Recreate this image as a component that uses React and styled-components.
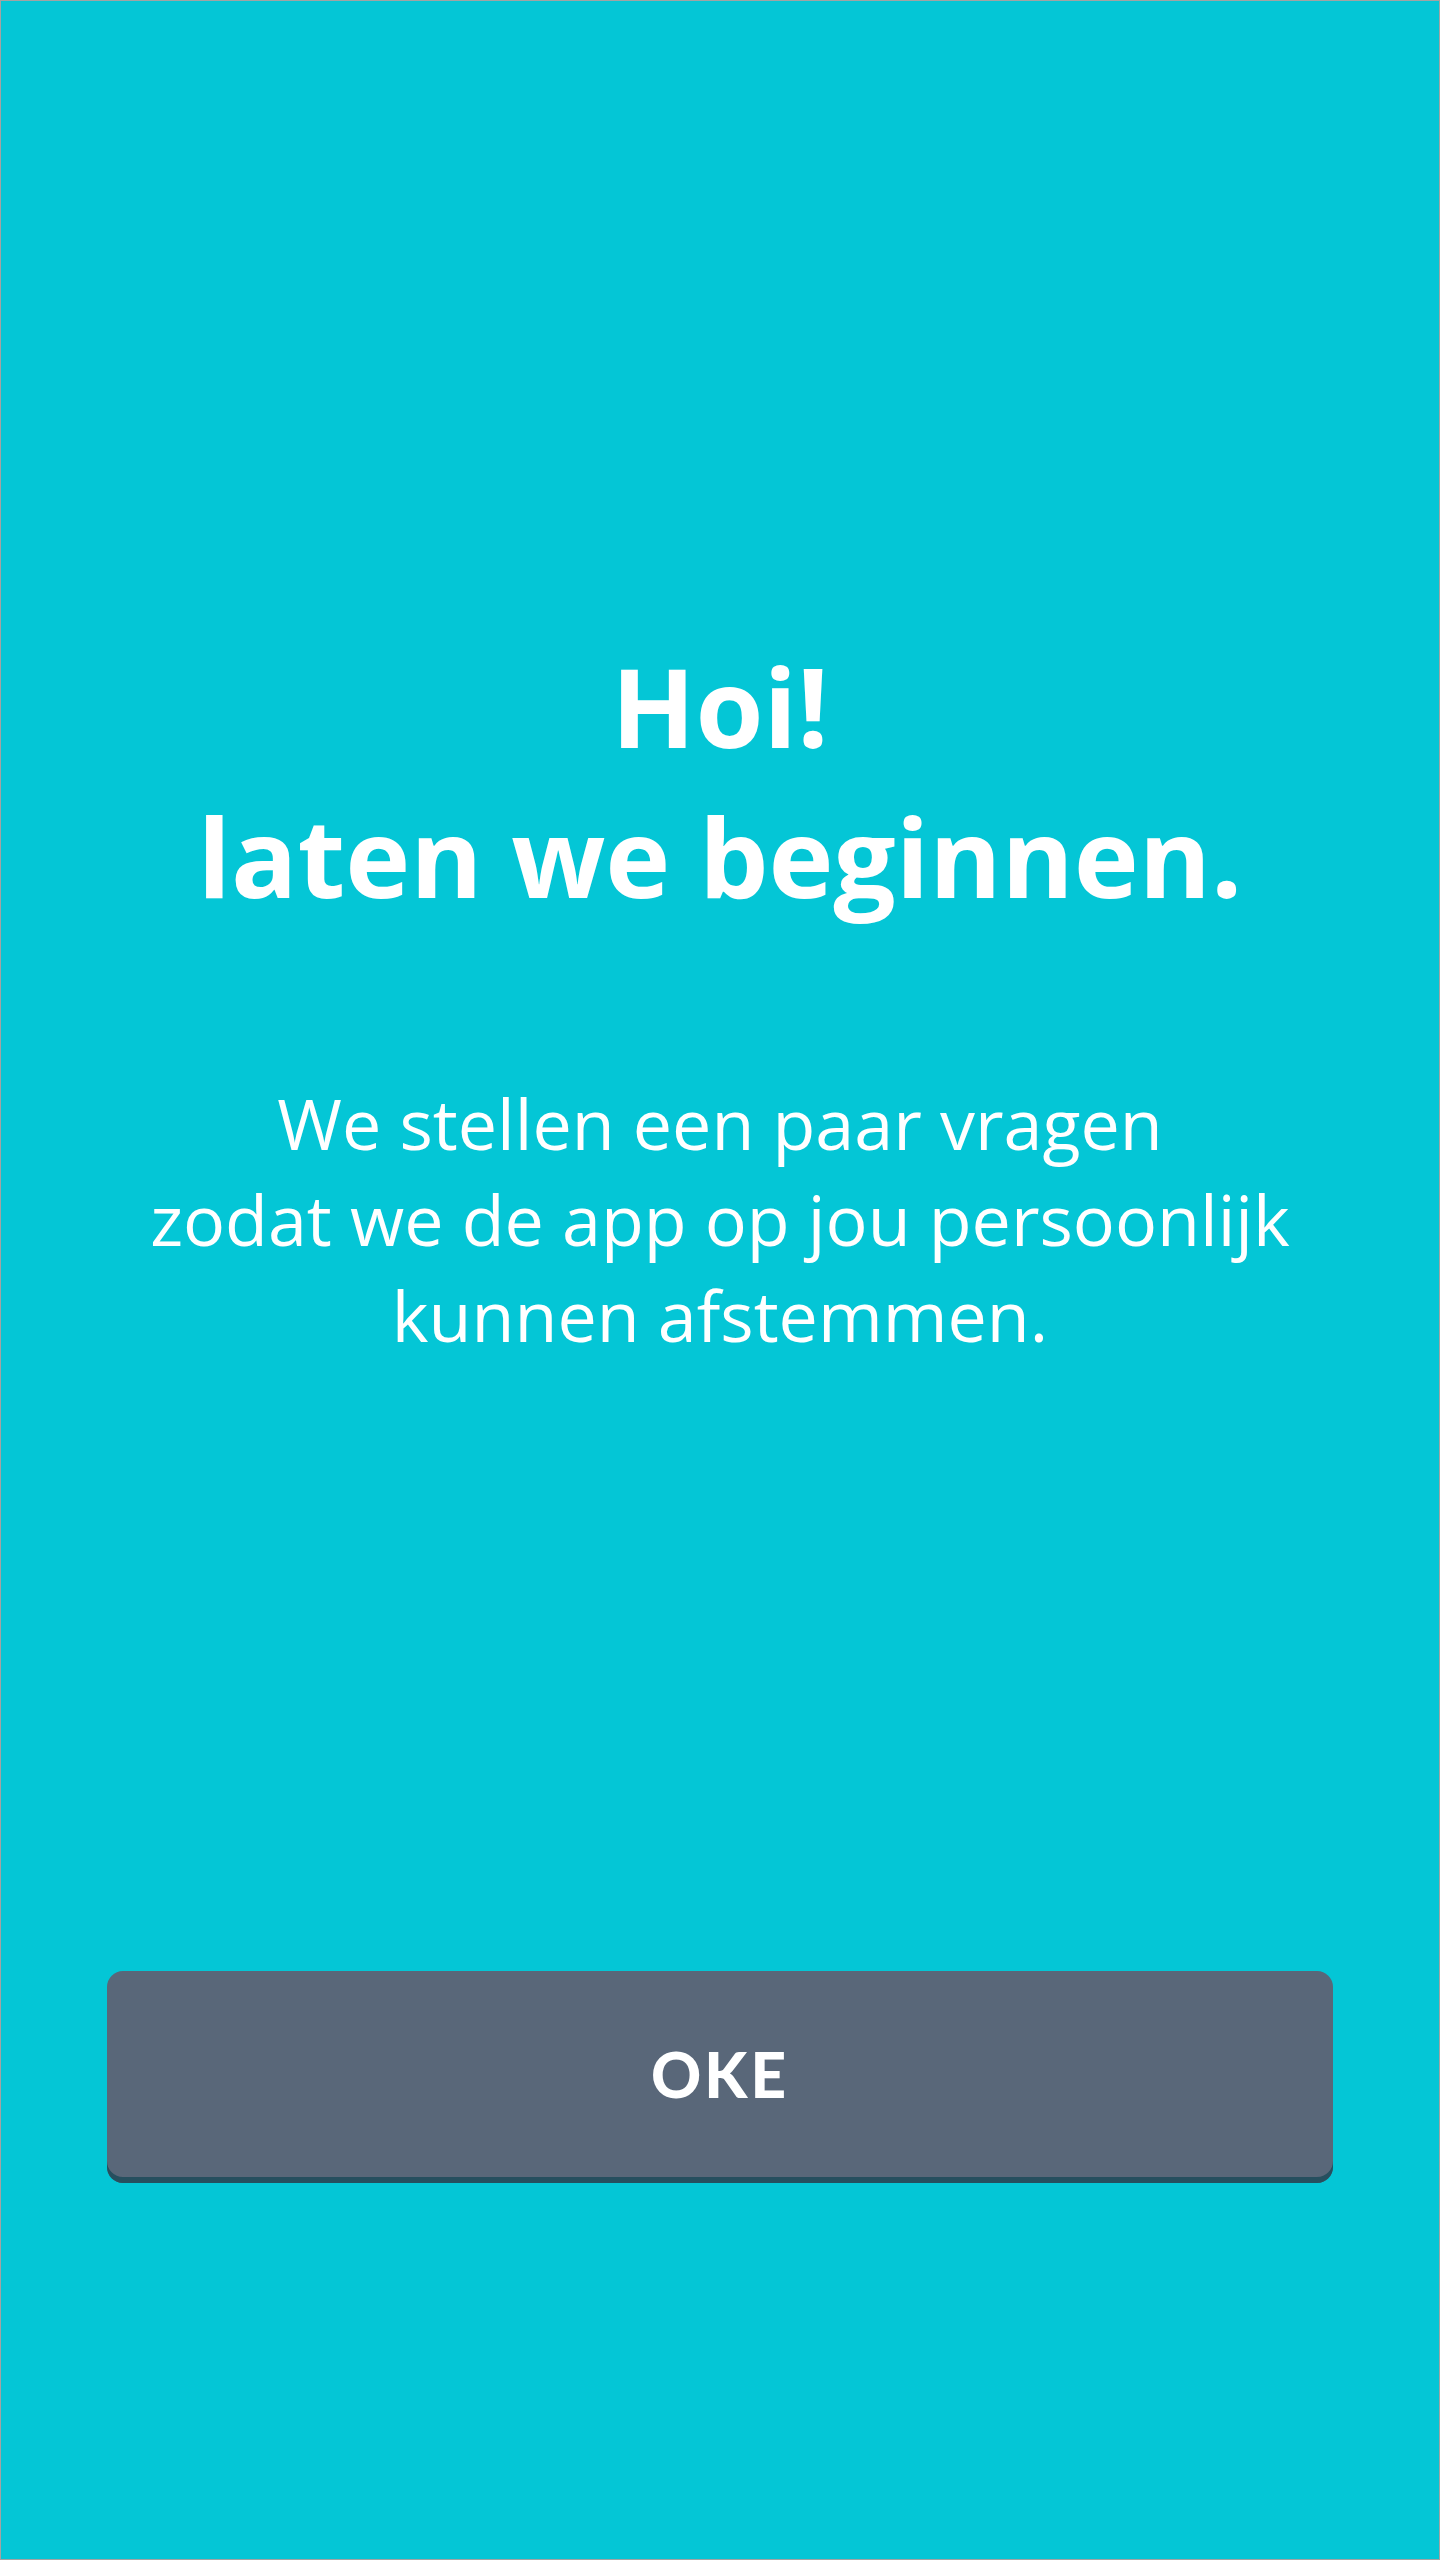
import React from "react";
import styled, { createGlobalStyle } from "styled-components";

const GlobalStyle = createGlobalStyle`
  html, body {
    margin: 0;
    padding: 0;
    background: #04c6d6;
  }
  * {
    box-sizing: border-box;
  }
`;

const Screen = styled.div`
  width: 1440px;
  height: 2560px;
  border: 1px solid #a3a3a3;
  background-color: #04c6d6;
  display: flex;
  flex-direction: column;
  align-items: center;
  font-family: "Open Sans", "Liberation Sans", sans-serif;
  color: #ffffff;
`;

const Title = styled.h1`
  margin: 629px 0 0;
  font-size: 110px;
  line-height: 150px;
  font-weight: 700;
  text-align: center;
`;

const Intro = styled.p`
  margin: 145px 0 0;
  font-size: 70px;
  line-height: 96px;
  font-weight: 400;
  text-align: center;
`;

const OkButton = styled.button`
  margin-top: 608px;
  width: 1226px;
  height: 212px;
  padding: 0 0 6px 0;
  border: none;
  border-radius: 16px;
  background-color: #596779;
  box-shadow: inset 0 -6px 0 #264f5f;
  color: #ffffff;
  font-family: "Lato", "Open Sans", sans-serif;
  font-size: 62px;
  font-weight: 900;
  letter-spacing: 3px;
  cursor: pointer;
`;

const App = () => {
  return (
    <>
      <GlobalStyle />
      <Screen>
        <Title>
          Hoi!
          <br />
          laten we beginnen.
        </Title>
        <Intro>
          We stellen een paar vragen
          <br />
          zodat we de app op jou persoonlijk
          <br />
          kunnen afstemmen.
        </Intro>
        <OkButton>OKE</OkButton>
      </Screen>
    </>
  );
};

export default App;
